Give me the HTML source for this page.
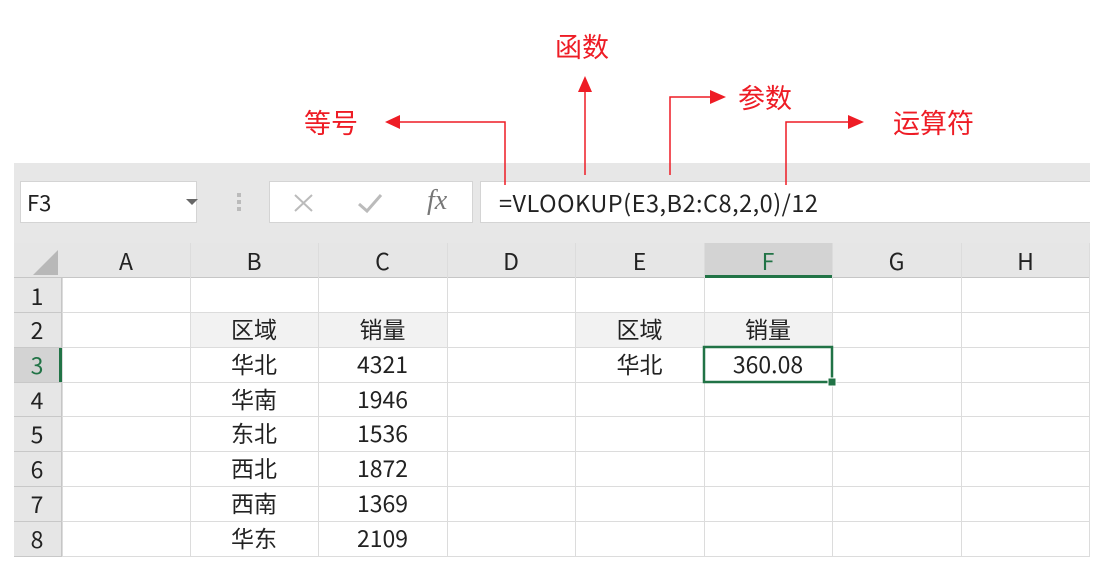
<!DOCTYPE html>
<html><head><meta charset="utf-8"><style>
*{margin:0;padding:0;box-sizing:border-box}
body{width:1112px;height:569px;background:#fff;position:relative;overflow:hidden;font-family:"Liberation Sans","Noto Sans CJK SC",sans-serif;color:#222}
.a{position:absolute}
.r{color:#ee1c25;font-size:27px;line-height:30px;font-family:"Noto Sans CJK SC",sans-serif}
.c{position:absolute;text-align:center;font-size:23px;line-height:33px;font-family:"Noto Sans CJK SC","Liberation Sans",sans-serif}
</style></head><body>
<div class="a" style="left:14px;top:163px;width:1076px;height:80px;background:#e7e7e7"></div>
<div class="a" style="left:20px;top:181px;width:177px;height:42px;background:#fff;border:1px solid #d4d4d4"></div>
<div class="a" style="left:27px;top:187px;font-size:22px;line-height:30px;font-family:'Noto Sans CJK SC',sans-serif">F3</div>
<div class="a" style="left:186px;top:199px;width:0;height:0;border-left:6px solid transparent;border-right:6px solid transparent;border-top:6px solid #666"></div>
<div class="a" style="left:237px;top:193px;width:4px;height:4px;background:#bbb"></div>
<div class="a" style="left:237px;top:200px;width:4px;height:4px;background:#bbb"></div>
<div class="a" style="left:237px;top:207px;width:4px;height:4px;background:#bbb"></div>
<div class="a" style="left:269px;top:181px;width:204px;height:42px;background:#fff;border:1px solid #d4d4d4"></div>
<svg class="a" style="left:290px;top:190px" width="30" height="26"><path d="M5 5L22 21M22 5L5 21" stroke="#bbb" stroke-width="2"/></svg>
<svg class="a" style="left:356px;top:190px" width="30" height="26"><path d="M3 14L11 21L25 5" stroke="#bbb" stroke-width="3" fill="none"/></svg>
<div class="a" style="left:427px;top:185px;font-family:'Liberation Serif',serif;font-style:italic;font-size:28px;color:#777">fx</div>
<div class="a" style="left:480px;top:181px;width:610px;height:42px;background:#fff;border:1px solid #d4d4d4;border-right:none"></div>
<div class="a" style="left:499px;top:186px;font-size:23.5px;line-height:32px;letter-spacing:0.5px;font-family:'Noto Sans CJK SC',sans-serif">=VLOOKUP(E3,B2:C8,2,0)/12</div>
<div class="a" style="left:14px;top:243px;width:1076px;height:35px;background:#e6e6e6;border-bottom:1px solid #c6c6c6"></div>
<div class="a" style="left:14px;top:278px;width:48px;height:278px;background:#e6e6e6;border-right:1px solid #c6c6c6"></div>
<svg class="a" style="left:30px;top:248px" width="30" height="28"><path d="M28 2V27H3Z" fill="#b8b8b8"/></svg>
<div class="a" style="left:704px;top:243px;width:128px;height:35px;background:#d3d3d3;border-bottom:3px solid #217346"></div>
<div class="a" style="left:14px;top:347px;width:48px;height:35px;background:#d3d3d3;border-right:3px solid #217346"></div>
<div class="a" style="left:190px;top:312px;width:257px;height:35px;background:#f2f2f2"></div>
<div class="a" style="left:575px;top:312px;width:257px;height:35px;background:#f2f2f2"></div>
<svg class="a" style="left:0;top:0" width="1112" height="569">
<g stroke="#dcdcdc" stroke-width="1">
<path d="M62.5 278V556M190.5 243V556M318.5 243V556M447.5 243V556M575.5 243V556M704.5 243V556M832.5 243V556M961.5 243V556M1089.5 243V556"/>
<path d="M62 312.5H1090M62 347.5H1090M62 382.5H1090M62 416.5H1090M62 451.5H1090M62 486.5H1090M62 521.5H1090M62 556.5H1090"/>
<path d="M14 312.5H62M14 347.5H62M14 382.5H62M14 416.5H62M14 451.5H62M14 486.5H62M14 521.5H62M14 556.5H62" stroke="#c8c8c8"/>
</g>
<rect x="704" y="347" width="128" height="35" fill="none" stroke="#217346" stroke-width="2.5"/>
<rect x="828" y="378" width="8" height="8" fill="#217346" stroke="#fff" stroke-width="1"/>
<g stroke="#ee1c25" stroke-width="1.5" fill="none">
<path d="M505 185V122H398"/><path d="M585 175V90"/><path d="M670 175V97H712"/><path d="M786 185V122H850"/>
</g>
<g fill="#ee1c25">
<path d="M385 122L400 115V129Z"/><path d="M585 76L578 92H592Z"/><path d="M726 97L710 90V104Z"/><path d="M864 122L848 115V129Z"/>
</g>
</svg>
<div class="a r" style="left:304px;top:107px">等号</div>
<div class="a r" style="left:555px;top:31px">函数</div>
<div class="a r" style="left:738px;top:82px">参数</div>
<div class="a r" style="left:893px;top:107px">运算符</div>
<div class="c" style="left:62px;top:244px;width:128px">A</div>
<div class="c" style="left:190px;top:244px;width:128px">B</div>
<div class="c" style="left:318px;top:244px;width:129px">C</div>
<div class="c" style="left:447px;top:244px;width:128px">D</div>
<div class="c" style="left:575px;top:244px;width:129px">E</div>
<div class="c" style="left:704px;top:244px;width:128px;color:#217346">F</div>
<div class="c" style="left:832px;top:244px;width:129px">G</div>
<div class="c" style="left:961px;top:244px;width:129px">H</div>
<div class="c" style="left:14px;top:279px;width:46px">1</div>
<div class="c" style="left:14px;top:313px;width:46px">2</div>
<div class="c" style="left:14px;top:348px;width:46px;color:#217346">3</div>
<div class="c" style="left:14px;top:383px;width:46px">4</div>
<div class="c" style="left:14px;top:417px;width:46px">5</div>
<div class="c" style="left:14px;top:452px;width:46px">6</div>
<div class="c" style="left:14px;top:487px;width:46px">7</div>
<div class="c" style="left:14px;top:522px;width:46px">8</div>
<div class="c" style="left:190px;top:312px;width:128px">区域</div>
<div class="c" style="left:318px;top:312px;width:129px">销量</div>
<div class="c" style="left:575px;top:312px;width:129px">区域</div>
<div class="c" style="left:704px;top:312px;width:128px">销量</div>
<div class="c" style="left:575px;top:347px;width:129px">华北</div>
<div class="c" style="left:704px;top:347px;width:128px">360.08</div>
<div class="c" style="left:190px;top:347px;width:128px">华北</div><div class="c" style="left:318px;top:347px;width:129px">4321</div>
<div class="c" style="left:190px;top:382px;width:128px">华南</div><div class="c" style="left:318px;top:382px;width:129px">1946</div>
<div class="c" style="left:190px;top:416px;width:128px">东北</div><div class="c" style="left:318px;top:416px;width:129px">1536</div>
<div class="c" style="left:190px;top:451px;width:128px">西北</div><div class="c" style="left:318px;top:451px;width:129px">1872</div>
<div class="c" style="left:190px;top:486px;width:128px">西南</div><div class="c" style="left:318px;top:486px;width:129px">1369</div>
<div class="c" style="left:190px;top:521px;width:128px">华东</div><div class="c" style="left:318px;top:521px;width:129px">2109</div>
</body></html>
